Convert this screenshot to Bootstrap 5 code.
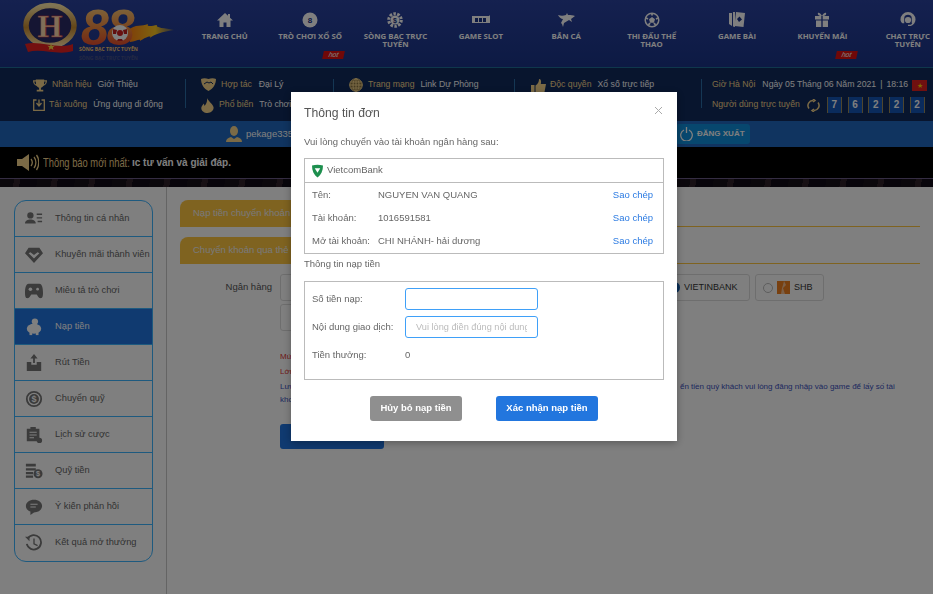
<!DOCTYPE html>
<html lang="vi">

<head>
  <meta charset="UTF-8" />
  <meta name="viewport" content="width=device-width, initial-scale=1" />
  <title>H88 - Nạp tiền</title>
  <link href="https://cdn.jsdelivr.net/npm/bootstrap@5.3.3/dist/css/bootstrap.min.css" rel="stylesheet" />
  <style>
    html, body { height: 100%; overflow: hidden; }
    body { font-family: "Liberation Sans", Arial, sans-serif; font-size: 9.5px; background: #fff; color: #555; width: 933px; height: 594px; }

    /* top menu */
    .top-head { height: 68px; background: linear-gradient(#2a429f, #1a3488); border-bottom: 1px solid #1f6f98; }
    .logo-box { width: 182px; flex: none; }
    .menu-item { width: 85.4px; flex: none; padding-top: 12px; text-align: center; color: #fff; position: relative; }
    .menu-item svg { display: block; margin: 0 auto 4px; height: 16px; }
    .menu-label { display: block; font-size: 7.8px; font-weight: 700; line-height: 8px; padding: 0 10px; font-family: "Open Sans", sans-serif; }
    .hot-tag { position: absolute; left: 56px; top: 51px; width: 21px; height: 8px; background: #e01010; color: #fff; font-size: 7px; line-height: 8px; font-style: italic; transform: skewX(-12deg); }

    /* info strip */
    .info-strip { height: 53px; background: #102a5c; color: #fff; padding-top: 11px; }
    .info-cell { height: 29px; border-right: 1px solid #2a6fa8; flex: none; font-size: 8.7px; }
    .info-line { height: 20px; margin-top: -4px; margin-bottom: 4px; white-space: nowrap; }
    .gold-text { color: #f6d58c; }
    .num-box { width: 15px; height: 16px; background: #1556b8; border-left: 1px solid #9a8a5a; border-right: 1px solid #9a8a5a; color: #fff; font-weight: 700; font-size: 10px; text-align: center; line-height: 16px; margin-right: 5.7px; flex: none; }
    .flag-box { width: 15px; height: 11px; background: #e02020; color: #ffd500; font-size: 7px; line-height: 11px; text-align: center; flex: none; }

    /* user bar */
    .user-bar { height: 26px; background: #2068c0; color: #fff; font-size: 9.5px; }
    .logout-btn { position: absolute; left: 676px; top: 124px; width: 74px; height: 20px; background: #0f8edc; border-radius: 3px; color: #fff; font-size: 8px; font-weight: 700; white-space: nowrap; }

    /* notice */
    .notice-bar { height: 31px; background: #000; color: #fff; }
    .notice-title { color: #f4d590; font-size: 13px; transform: scaleX(.72); transform-origin: left; width: 86px; white-space: nowrap; }
    .deco-strip { height: 9px; background: repeating-linear-gradient(100deg, #171019 0 14px, #2e2129 14px 20px, #100b16 20px 37px); border-top: 1px solid #6a5a86; }

    /* body */
    .main-wrap { height: 407px; background: #fff; border-radius: 8px 8px 0 0; position: relative; }
    .side-col { width: 167px; flex: none; border-right: 1px solid #c8c8c8; padding: 13px 13px 0 14px; height: 100%; }
    .side-menu { border: 1px solid #3cb4ff; border-radius: 12px; overflow: hidden; }
    .side-item { height: 36px; border-bottom: 1px solid #3cb4ff; color: #666; font-size: 9.3px; white-space: nowrap; padding-left: 10px; }
    .side-item:last-child { border-bottom: 0; }
    .side-item svg { width: 18px; height: 18px; margin-right: 12px; flex: none; fill: #777; }
    .side-item.is-on { background: #2074e0; color: #fff; }
    .side-item.is-on svg { fill: #fff; }
    .pay-col { padding: 13px 13px 0 13px; flex: 1; }
    .pay-tab { height: 27px; border-bottom: 1px solid #ffc640; margin-bottom: 10px; }
    .pay-tab span { display: block; width: 130px; height: 27px; border-radius: 8px 8px 0 0; background: #ffc640; color: #f2f2f2; padding: 6px 0 0 13px; font-size: 9.5px; }
    .bank-label { width: 92px; text-align: right; font-size: 9.5px; padding-top: 6px; color: #555; }
    .bank-opt { height: 27px; border: 1px solid #ddd; border-radius: 3px; position: absolute; font-size: 9px; color: #333; }
    .radio-dot { width: 10px; height: 10px; border: 1px solid #bbb; border-radius: 50%; flex: none; }
    .pay-note { position: absolute; left: 280px; font-size: 8px; white-space: nowrap; }
    .note-red { color: #e03030; }
    .note-blue { color: #3a50c0; }
    .submit-btn { position: absolute; left: 280px; top: 237px; width: 104px; height: 25px; background: #2074e0; border-radius: 3px; }

    /* dialog */
    .order-dialog { width: 386px; max-width: 386px; margin: 92px 0 0 291px; }
    .order-dialog .modal-content { border: 0; border-radius: 0; height: 349px; box-shadow: 0 2px 8px rgba(0,0,0,.3); color: #666; font-size: 9.5px; }
    .order-dialog .modal-header { border: 0; padding: 13px 13px 0; height: 37px; align-items: flex-start; }
    .order-dialog .modal-title { font-size: 12.2px; line-height: 16px; font-weight: 400; color: #555; }
    .x-mark { margin: 2px 2px 0 0; }
    .order-dialog .modal-body { padding: 0 13px; }
    .lead-line { height: 23px; line-height: 14px; margin-top: 6px; }
    .box-frame { border: 1px solid #bbb; }
    .bank-head { height: 24px; border-bottom: 1px solid #bbb; padding-left: 7px; }
    .bank-rows { height: 70px; padding-top: 1px; }
    .bank-row { height: 23px; padding: 0 7px; }
    .row-key { width: 66px; flex: none; }
    .copy-link { color: #2a7ae2; text-decoration: none; margin-left: auto; margin-right: 3px; }
    .sub-line { height: 27px; line-height: 20px; }
    .form-frame { height: 99px; padding: 6px 7px; }
    .form-line { height: 22px; margin-bottom: 6px; }
    .form-key { width: 93px; flex: none; }
    .amount-input { width: 133px; height: 22px; border: 1px solid #3fa0f8; border-radius: 3px; padding: 0 10px; font-size: 9.2px; color: #555; outline: 0; font-family: inherit; }
    .amount-input::placeholder { color: #bbb; }
    .dialog-btns { padding-top: 16px; gap: 34px; }
    .dialog-btn { height: 25px; border: 0; border-radius: 3px; color: #fff; font-size: 9.5px; font-weight: 700; padding: 0; }
    .btn-gray { width: 92px; background: #8f8f8f; }
    .btn-blue { width: 102px; background: #2276de; }
  </style>
</head>

<body>

  <!-- Top menu -->
  <div class="top-head d-flex overflow-hidden">
    <div class="logo-box">
      <svg width="182" height="67" viewBox="0 0 182 67">
        <defs>
          <linearGradient id="goldFill" x1="0" y1="0" x2="0" y2="1">
            <stop offset="0" stop-color="#ffe9a8" />
            <stop offset=".55" stop-color="#c88c30" />
            <stop offset="1" stop-color="#ffe0a0" />
          </linearGradient>
          <linearGradient id="eightFill" x1="0" y1="0" x2="0" y2="1">
            <stop offset="0" stop-color="#ffe08a" />
            <stop offset=".55" stop-color="#f08038" />
            <stop offset="1" stop-color="#e02828" />
          </linearGradient>
          <linearGradient id="flameFill" x1="0" y1="0" x2="1" y2="0">
            <stop offset="0" stop-color="#ff7a10" />
            <stop offset=".6" stop-color="#ffc820" />
            <stop offset="1" stop-color="#ffc820" stop-opacity=".2" />
          </linearGradient>
        </defs>
        <ellipse cx="50" cy="25.500" rx="24" ry="20" fill="#2a2a66" stroke="url(#goldFill)" stroke-width="5.500" />
        <path d="M25 44 C40 40 58 50 73 44 L73 51 C58 56 42 48 28 52 Z" fill="#e82020" />
        <path d="M51 43.500 l1.100 2.500 2.700-.2-2 1.700.7 2.600-2.500-1.500-2.300 1.500.7-2.600-2-1.700 2.700.2z" fill="#ffd840" />
        <text x="50" y="37" text-anchor="middle" font-family="Liberation Serif, serif" font-weight="700" font-size="32" fill="#ffdcb0" stroke="#e04040" stroke-width=".5">H</text>
        <path d="M127 31 C136 23 142 27 148 24 C146 27 152 26 157 25 C155 28 165 28 174 30 C162 32 155 34 150 38 C152 35 146 37 140 41 C141 38 136 41 130 42 Z" fill="url(#flameFill)" />
        <text x="81" y="45" font-family="Liberation Sans, sans-serif" font-weight="700" font-style="italic" font-size="50" letter-spacing="-2" fill="url(#eightFill)">88</text>
        <circle cx="120" cy="33" r="8" fill="#fff" />
        <circle cx="120" cy="33" r="3" fill="#d02020" />
        <path d="M113 29 l4 1-1 4-3 0z M127 29 l-4 1 1 4 3 0z M118 39h4l1 2h-6z" fill="#c02020" />
        <text x="79" y="51" font-family="Open Sans, sans-serif" font-weight="700" font-size="5" fill="#ffcc70">SÒNG BẠC TRỰC TUYẾN</text>
        <text x="79" y="60" font-family="Open Sans, sans-serif" font-weight="700" font-size="5" fill="#ffcc70" opacity=".18">SÒNG BẠC TRỰC TUYẾN</text>
      </svg>
    </div>
    <div class="menu-item">
      <svg width="16" height="16" viewBox="0 0 16 16" fill="#fff"><path d="M8 1 0 8.500h2.500V15h4v-4.500h3V15h4V8.500H16L13 5.700V2h-2v1.800z" /></svg>
      <span class="menu-label">TRANG CHỦ</span>
    </div>
    <div class="menu-item">
      <svg width="16" height="16" viewBox="0 0 16 16"><circle cx="8" cy="8" r="7.500" fill="#fff" /><text x="8" y="11" text-anchor="middle" font-size="8" font-weight="700" fill="#1a3488">8</text></svg>
      <span class="menu-label">TRÒ CHƠI XỔ SỐ</span>
      <span class="hot-tag">hot</span>
    </div>
    <div class="menu-item">
      <svg width="16" height="16" viewBox="0 0 16 16"><circle cx="8" cy="8" r="6.300" fill="none" stroke="#fff" stroke-width="3" stroke-dasharray="2.500 1.400" /><circle cx="8" cy="8" r="4.500" fill="#fff" /><text x="8" y="10.500" text-anchor="middle" font-size="7" font-weight="700" fill="#1a3488">$</text></svg>
      <span class="menu-label">SÒNG BẠC TRỰC TUYẾN</span>
    </div>
    <div class="menu-item">
      <svg width="18" height="16" viewBox="0 0 18 16"><path d="M0 4h17l1-1v8H0z" fill="#fff" /><path d="M3 6h3v4H3zM7 6h3v4H7zM11 6h3v4h-3z" fill="#1a3488" /></svg>
      <span class="menu-label">GAME SLOT</span>
    </div>
    <div class="menu-item">
      <svg width="18" height="16" viewBox="0 0 18 16" fill="#fff"><path d="M1 3c3 1 5 1 8 0l1-2 1 2c3 0 5 0 7 1l-4 3 1 3-3-2-5 3-1 4-1-3-1-1 2-4C4 7 2 5 1 3z" /></svg>
      <span class="menu-label">BẮN CÁ</span>
    </div>
    <div class="menu-item">
      <svg width="16" height="16" viewBox="0 0 16 16"><circle cx="8" cy="8" r="6.800" fill="none" stroke="#fff" stroke-width="1.500" /><path d="M8 5l3 2.200-1.100 3.500H6.100L5 7.200z" fill="#fff" /><path d="M8 1.500v2M2 6l2 1M14 6l-2 1M4.500 13l1.500-2M11.500 13 10 11" stroke="#fff" stroke-width="1.800" /></svg>
      <span class="menu-label">THI ĐẤU THỂ THAO</span>
    </div>
    <div class="menu-item">
      <svg width="18" height="16" viewBox="0 0 18 16" fill="#fff"><path d="M1 1h3v13L1 12zM5 0h2v15l-2-.5z" /><path d="M8 0l9 1-1.500 14-9-1z" /><path d="M11.500 4.500l2.500 3-3 2.500-2-3z" fill="#1a3488" /></svg>
      <span class="menu-label">GAME BÀI</span>
    </div>
    <div class="menu-item">
      <svg width="16" height="16" viewBox="0 0 16 16" fill="#fff"><path d="M1 4h6.300v3.500H1zM8.700 4H15v3.500H8.700zM2 8.500h5.300V15H2zM8.700 8.500H14V15H8.700z" /><path d="M8 4C6 0 3 0 4 2.500c.5 1 2.500 1.500 4 1.500 1.500 0 3.500-.5 4-1.500C13 0 10 0 8 4z" /></svg>
      <span class="menu-label">KHUYẾN MÃI</span>
      <span class="hot-tag">hot</span>
    </div>
    <div class="menu-item">
      <svg width="16" height="17" viewBox="0 0 16 17" fill="#fff"><path d="M8 0a8 8 0 0 1 8 8c0 3-2 6-5 7H8v-1.500h2.500c1 0 1.500-.5 2-1.500H12V6.500C12 4 10 3 8 3S4 4 4 6.500V12H2C.7 11 0 9.500 0 8a8 8 0 0 1 8-8z" /><circle cx="8" cy="8.500" r="3.300" /></svg>
      <span class="menu-label">CHAT TRỰC TUYẾN</span>
    </div>
  </div>

  <!-- Info strip -->
  <div class="info-strip d-flex">
    <div class="info-cell" style="width:186px;padding-left:33px">
      <div class="info-line d-flex align-items-center">
        <svg class="me-1" width="14" height="15" viewBox="0 0 15 15" fill="#f6d58c"><path d="M3 1h9v1h3c0 3-1 5-4 6-.5 1-1.500 1.500-2.500 2v2H11v2H4v-2h2.500v-2C5.500 9.500 4.500 9 4 8 1 7 0 5 0 2h3zM1.500 3.200c0 1.500.6 2.800 1.800 3.300L3 3.200zM13.500 3.200H12l-.3 3.300c1.200-.5 1.800-1.800 1.800-3.300z" /></svg>
        <span class="gold-text" style="margin:0 6px 0 1px">Nhãn hiệu</span><span>Giới Thiệu</span>
      </div>
      <div class="info-line d-flex align-items-center">
        <svg class="me-1" width="12" height="12" viewBox="0 0 12 12" fill="none" stroke="#f6d58c" stroke-width="1.300"><path d="M3.500 1H.7v10.300h10.600V1H8.500" /><path d="M6 .5v5.500M3.500 4 6 7l2.500-3" /></svg>
        <span class="gold-text" style="margin-right:6px">Tải xuống</span><span>Ứng dụng di động</span>
      </div>
    </div>
    <div class="info-cell" style="width:148px;padding-left:15px">
      <div class="info-line d-flex align-items-center">
        <svg class="me-1" width="15" height="14" viewBox="0 0 15 14" fill="#f6d58c"><path d="M0 1c2-1 5-1 7.500 0C10 0 13 0 15 1c0 5-3 10-7.500 12C3 11 0 6 0 1z" /><path d="M3 6l3-2 2 1 2-1 2 2" stroke="#102a5c" fill="none" /></svg>
        <span class="gold-text" style="margin:0 7px 0 1px">Hợp tác</span><span>Đại Lý</span>
      </div>
      <div class="info-line d-flex align-items-center">
        <svg class="me-1" width="13" height="15" viewBox="0 0 13 15" fill="#f6d58c"><path d="M6 0c1 3 5 5 6.500 9 .6 3-2 6-6 6S-.5 12 .5 9c.5-1.500 1.500-2 2-3.500.7.800 1 1.500 1 2.500C5.500 6 6.500 3 6 0z" /></svg>
        <span class="gold-text" style="margin:0 6px 0 1px">Phổ biến</span><span>Trò chơi</span>
      </div>
    </div>
    <div class="info-cell" style="width:181px;padding-left:15px">
      <div class="info-line d-flex align-items-center">
        <svg class="me-1" width="14" height="14" viewBox="0 0 14 14" fill="none" stroke="#f6d58c"><circle cx="7" cy="7" r="6.300" fill="#8a7440" /><ellipse cx="7" cy="7" rx="3" ry="6.300" /><path d="M.7 7h12.600M1.500 4h11M1.500 10h11M7 .7v12.600" /></svg>
        <span class="gold-text" style="margin:0 6px 0 1px">Trang mạng</span><span>Link Dự Phòng</span>
      </div>
    </div>
    <div class="info-cell" style="width:187px;padding-left:16px">
      <div class="info-line d-flex align-items-center">
        <svg class="me-1" width="15" height="13" viewBox="0 0 15 13" fill="#f6d58c"><rect y="6" width="3.500" height="7" /><path d="M4.500 6.500C7 5 8 3 8 0c2 0 2.500 2 1.800 5H15l-1.500 8h-9z" /></svg>
        <span class="gold-text" style="margin-right:6px">Độc quyền</span><span>Xổ số trực tiếp</span>
      </div>
    </div>
    <div class="info-cell border-0" style="width:231px;padding-left:10px">
      <div class="info-line d-flex align-items-center">
        <span class="gold-text" style="margin-right:7px">Giờ Hà Nội</span><span>Ngày 05 Tháng 06 Năm 2021</span>
        <span class="mx-1">|</span><span class="me-1">18:16</span><span class="flag-box">★</span>
      </div>
      <div class="info-line d-flex align-items-center">
        <span class="gold-text" style="margin-right:7px">Người dùng trực tuyến</span>
        <svg style="margin-right:7px" width="13" height="13" viewBox="0 0 13 13" fill="none" stroke="#f6d58c" stroke-width="1.500"><path d="M2 9.500A5 5 0 0 1 6.500 1.500M11 3.500a5 5 0 0 1-4.500 8" /><path d="M6 0l2 1.500L6 3M7 10l-2 1.500L7 13" /></svg>
        <span class="num-box">7</span><span class="num-box">6</span><span class="num-box">2</span><span class="num-box">2</span><span class="num-box">2</span>
      </div>
    </div>
  </div>

  <!-- User bar -->
  <div class="user-bar d-flex align-items-center" style="padding-left:226px">
    <svg class="me-1" width="16" height="16" viewBox="0 0 16 16" fill="#f6d58c"><ellipse cx="8" cy="5" rx="4" ry="5" /><path d="M0 16c0-3 2-4 5-5l3 2 3-2c3 1 5 2 5 5z" /></svg>
    <span>pekage3352</span>
  </div>
  <div class="logout-btn d-flex align-items-center ps-1">
    <svg class="me-1" width="13" height="14" viewBox="0 0 13 14" fill="none" stroke="#fff" stroke-width="1.300"><path d="M4 3a5.800 5.800 0 1 0 5 0M6.500 0v6" /></svg>
    <span>ĐĂNG XUẤT</span>
  </div>

  <!-- Notice -->
  <div class="notice-bar d-flex align-items-center" style="padding-left:17px">
    <svg class="me-1" width="22" height="17" viewBox="0 0 22 17" fill="#f6d58c"><path d="M0 5h5l7-5v17l-7-5H0z" /><path d="M14 5c1.500 2 1.500 5 0 7M17 3c2.500 3 2.500 8 0 11M19.500 1c3 4 3 11 0 15" fill="none" stroke="#f6d58c" stroke-width="1.300" /></svg>
    <span class="notice-title">Thông báo mới nhất:</span>
    <span class="fw-bold" style="margin-left:3px;font-size:10px">ıc tư vấn và giải đáp.</span>
  </div>
  <div class="deco-strip"></div>

  <!-- Account page -->
  <div class="main-wrap d-flex">
    <div class="side-col">
      <div class="side-menu">
        <div class="side-item d-flex align-items-center">
          <svg viewBox="0 0 20 20"><circle cx="6" cy="6" r="3.500" /><path d="M0 15c0-3 3-4.500 6-4.500s6 1.500 6 4.500zM13 4h6v1.500h-6zM13 8h6v1.500h-6zM14 12h5v1.500h-5z" /></svg>
          Thông tin cá nhân
        </div>
        <div class="side-item d-flex align-items-center">
          <svg viewBox="0 0 20 20"><path d="M4 2h12l4 6-10 11L0 8zM4 8l6 6 6-6-2-1-4 3-4-3z" /></svg>
          Khuyến mãi thành viên
        </div>
        <div class="side-item d-flex align-items-center">
          <svg viewBox="0 0 20 20"><path d="M4 2h12c3 0 4 5 4 10 0 5-1 6-3 6s-3-3-4-4H7c-1 1-2 4-4 4s-3-1-3-6C0 7 1 2 4 2z" /><circle cx="6" cy="8" r="2" fill="#fff" /><circle cx="14" cy="8" r="1.500" fill="#fff" /></svg>
          Miêu tả trò chơi
        </div>
        <div class="side-item is-on d-flex align-items-center">
          <svg viewBox="0 0 20 20"><ellipse cx="10" cy="12" rx="8" ry="5.500" /><rect x="5" y="15" width="3" height="4" /><rect x="12" y="15" width="3" height="4" /><circle cx="11" cy="4" r="3.500" /></svg>
          Nạp tiền
        </div>
        <div class="side-item d-flex align-items-center">
          <svg viewBox="0 0 20 20"><path d="M10 0l4 5h-3v5H9V5H6zM2 9h5v3h6V9h5v10H2z" /></svg>
          Rút Tiền
        </div>
        <div class="side-item d-flex align-items-center">
          <svg viewBox="0 0 20 20"><circle cx="10" cy="10" r="8" fill="none" stroke="#777" stroke-width="2" /><circle cx="10" cy="10" r="5.500" /><text x="10" y="13.500" text-anchor="middle" font-size="10" font-weight="700" fill="#fff">$</text></svg>
          Chuyển quỹ
        </div>
        <div class="side-item d-flex align-items-center">
          <svg viewBox="0 0 20 20"><path d="M2 3h4V1h6v2h4v14H2z" /><path d="M5 7h8M5 10h8M5 13h5" stroke="#fff" stroke-width="1.200" /><circle cx="16" cy="16" r="3" /></svg>
          Lịch sử cược
        </div>
        <div class="side-item d-flex align-items-center">
          <svg viewBox="0 0 20 20"><path d="M1 2h11v3H1zM1 7h11v2.500H1zM1 11h8v2.500H1zM1 15h8v2.500H1z" /><circle cx="14.500" cy="13" r="5" /><text x="14.500" y="16" text-anchor="middle" font-size="8" font-weight="700" fill="#fff">$</text></svg>
          Quỹ tiền
        </div>
        <div class="side-item d-flex align-items-center">
          <svg viewBox="0 0 20 20"><path d="M10 2c5 0 9 3 9 7s-4 7-9 7l-4 3v-4c-3-1-5-3-5-6 0-4 4-7 9-7z" /><path d="M6 7h8M6 10h6" stroke="#fff" stroke-width="1.200" /></svg>
          Ý kiến phản hồi
        </div>
        <div class="side-item d-flex align-items-center">
          <svg viewBox="0 0 20 20" fill="none"><path d="M3 5a8 8 0 1 1-1 6" fill="none" stroke="#777" stroke-width="2" /><path d="M0 3l5 0 0 5z" /><path d="M10 5v6l4 2" fill="none" stroke="#777" stroke-width="1.500" /></svg>
          Kết quả mở thưởng
        </div>
      </div>
    </div>
    <div class="pay-col">
      <div class="pay-tab"><span>Nạp tiền chuyển khoản</span></div>
      <div class="pay-tab"><span>Chuyển khoản qua thẻ</span></div>
      <div class="bank-label">Ngân hàng</div>
    </div>
    <div class="bank-opt" style="left:280px;top:87px;width:60px"></div>
    <div class="bank-opt" style="left:280px;top:117px;width:60px"></div>
    <div class="bank-opt d-flex align-items-center" style="left:664px;top:87px;width:86px;padding-left:4px">
      <svg class="me-1" width="11" height="11" viewBox="0 0 11 11"><circle cx="5.500" cy="5.500" r="5.500" fill="#1560b0" /><path d="M3 1l5 0-2 9z" fill="#e02030" /></svg>
      VIETINBANK
    </div>
    <div class="bank-opt d-flex align-items-center" style="left:755px;top:87px;width:69px;padding-left:7px">
      <span class="radio-dot me-1"></span>
      <svg class="me-1" width="13" height="13" viewBox="0 0 13 13"><rect width="13" height="13" fill="#f08020" /><path d="M7 0l2 4-3 3 2 6H4l1-6 1-3z" fill="#f8c090" /></svg>SHB
    </div>
    <div class="pay-note note-red" style="top:164px">Mức</div>
    <div class="pay-note note-red" style="top:179px">Lớn</div>
    <div class="pay-note note-blue" style="top:194px">Lưu</div>
    <div class="pay-note note-blue" style="top:194px;left:680px">ển tiền quý khách vui lòng đăng nhập vào game để lấy số tài</div>
    <div class="pay-note note-blue" style="top:207px">khoản</div>
    <div class="submit-btn"></div>
  </div>

  <!-- Backdrop and order dialog -->
  <div class="modal-backdrop show"></div>
  <div class="modal d-block show" tabindex="-1" role="dialog" aria-modal="true">
    <div class="modal-dialog order-dialog">
      <div class="modal-content">
        <div class="modal-header">
          <h5 class="modal-title">Thông tin đơn</h5>
          <svg class="x-mark ms-auto" width="7" height="7" viewBox="0 0 7 7" fill="none" stroke="#aaa"><path d="M0 0l7 7M7 0l-7 7" /></svg>
        </div>
        <div class="modal-body">
          <div class="lead-line">Vui lòng chuyển vào tài khoản ngân hàng sau:</div>
          <div class="box-frame">
            <div class="bank-head d-flex align-items-center">
              <svg class="me-1" width="11" height="14" viewBox="0 0 12 14"><path d="M0 1c4-1 8-1 12 0 0 6-2 10-6 13C2 11 0 7 0 1z" fill="#1d8f4e" /><path d="M3 4h6L6 9z" fill="#fff" /></svg>
              VietcomBank
            </div>
            <div class="bank-rows">
              <div class="bank-row d-flex align-items-center"><span class="row-key">Tên:</span><span>NGUYEN VAN QUANG</span><a class="copy-link" href="#">Sao chép</a></div>
              <div class="bank-row d-flex align-items-center"><span class="row-key">Tài khoản:</span><span>1016591581</span><a class="copy-link" href="#">Sao chép</a></div>
              <div class="bank-row d-flex align-items-center"><span class="row-key">Mở tài khoản:</span><span>CHI NHÁNH- hải dương</span><a class="copy-link" href="#">Sao chép</a></div>
            </div>
          </div>
          <div class="sub-line">Thông tin nạp tiền</div>
          <div class="box-frame form-frame">
            <div class="form-line d-flex align-items-center"><span class="form-key">Số tiền nạp:</span><input class="amount-input" type="text" /></div>
            <div class="form-line d-flex align-items-center"><span class="form-key">Nội dung giao dịch:</span><input class="amount-input" type="text" placeholder="Vui lòng điền đúng nội dung giao dịch" /></div>
            <div class="form-line d-flex align-items-center"><span class="form-key">Tiền thưởng:</span><span>0</span></div>
          </div>
          <div class="dialog-btns d-flex justify-content-center">
            <button class="dialog-btn btn-gray" type="button">Hủy bỏ nạp tiền</button>
            <button class="dialog-btn btn-blue" type="button">Xác nhận nạp tiền</button>
          </div>
        </div>
      </div>
    </div>
  </div>

  <script src="https://cdn.jsdelivr.net/npm/bootstrap@5.3.3/dist/js/bootstrap.bundle.min.js"></script>
</body>

</html>
